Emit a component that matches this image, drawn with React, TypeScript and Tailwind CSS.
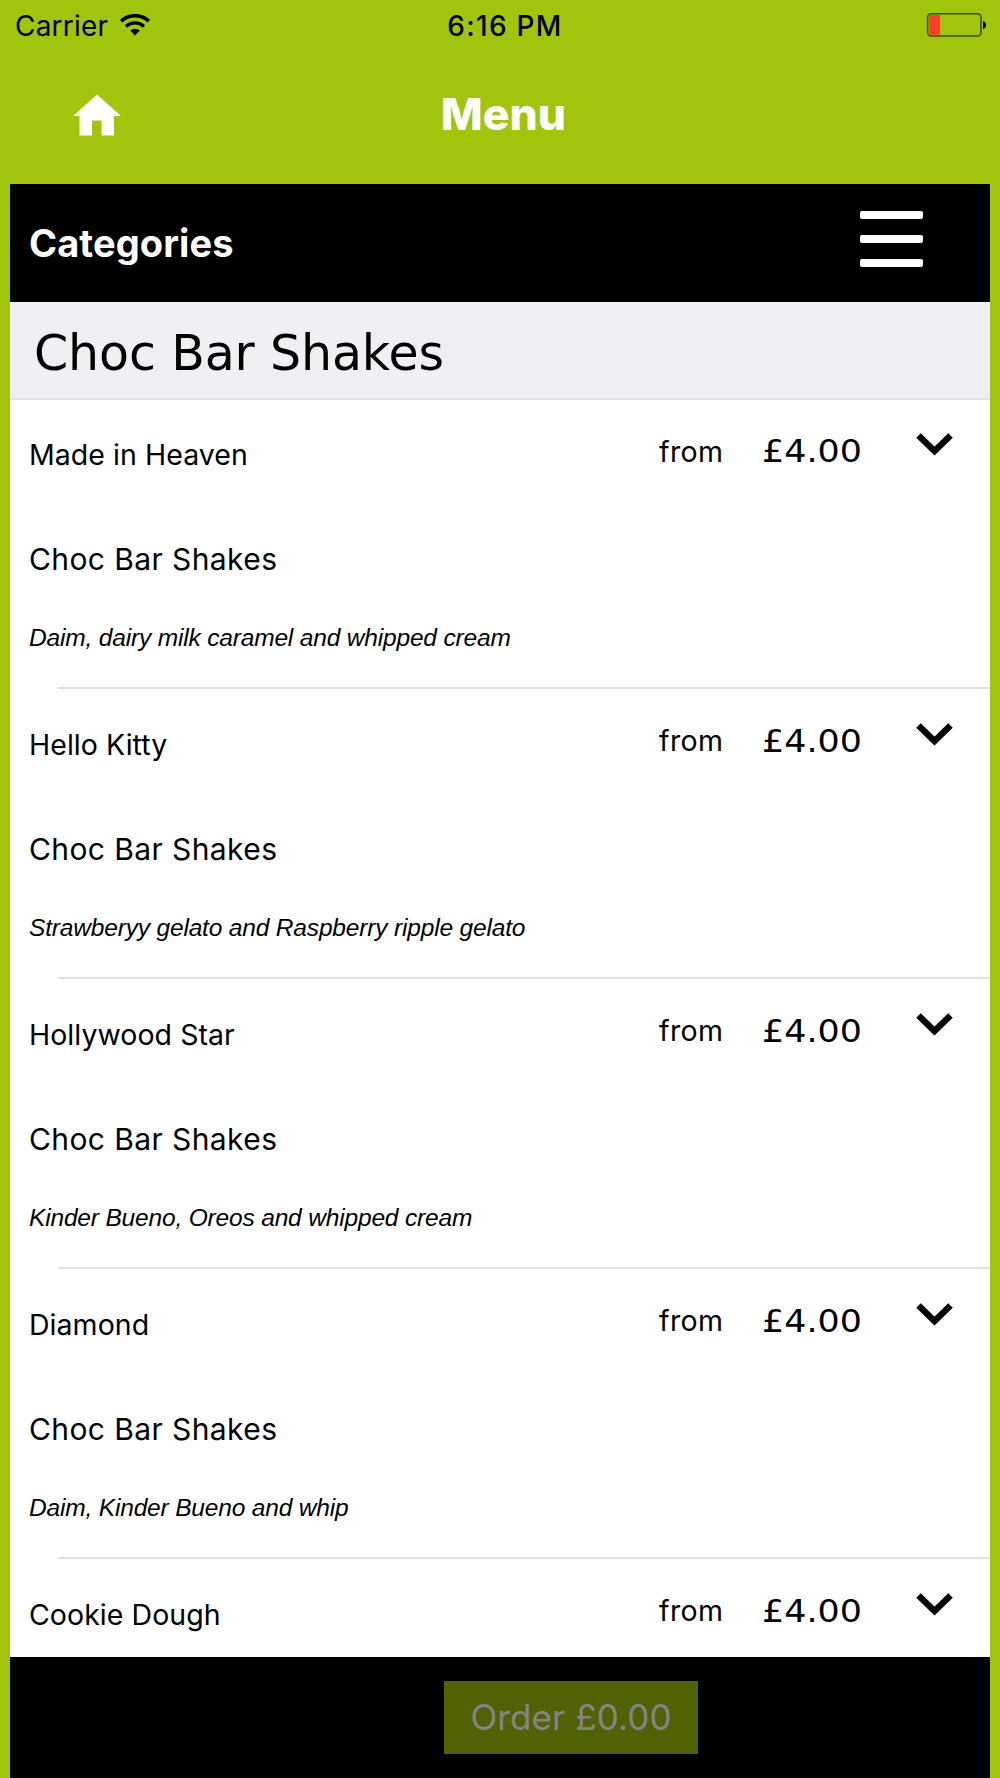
const menuItems = [
  {
    name: "Made in Heaven",
    category: "Choc Bar Shakes",
    description: "Daim, dairy milk caramel and whipped cream",
    price: "£4.00",
  },
  {
    name: "Hello Kitty",
    category: "Choc Bar Shakes",
    description: "Strawberyy gelato and Raspberry ripple gelato",
    price: "£4.00",
  },
  {
    name: "Hollywood Star",
    category: "Choc Bar Shakes",
    description: "Kinder Bueno, Oreos and whipped cream",
    price: "£4.00",
  },
  {
    name: "Diamond",
    category: "Choc Bar Shakes",
    description: "Daim, Kinder Bueno and whip",
    price: "£4.00",
  },
  {
    name: "Cookie Dough",
    price: "£4.00",
  },
];

type MenuItem = {
  name: string;
  price: string;
  category?: string;
  description?: string;
};

function StatusBar() {
  return (
    <div className="grid h-[51px] shrink-0 grid-cols-3 items-center pl-[15px] pr-[14px] text-[28px] leading-[51px]">
      <div className="flex items-center gap-[12px]">
        <span className="pt-px tracking-[0.2px]">Carrier</span>
        <svg className="mb-[3px] h-[22px] w-[30px]" viewBox="0 0 30 22" fill="none">
          <path d="M1.2 7.2a20 20 0 0 1 27.6 0" stroke="black" strokeWidth="3.6" />
          <path d="M6 12.4a13.2 13.2 0 0 1 18 0" stroke="black" strokeWidth="3.4" />
          <path d="M10.2 16.6a7.2 7.2 0 0 1 9.6 0L15 21.6z" fill="black" />
        </svg>
      </div>
      <span className="pt-px pl-[9px] text-center font-medium tracking-[1.3px]">6:16 PM</span>
      <svg className="mb-[2px] h-[24px] w-[60px] justify-self-end" viewBox="0 0 60 24" fill="none">
        <rect x="1.6" y="0.8" width="53.4" height="22.2" rx="3.5" stroke="#3f4e06" strokeWidth="1.6" />
        <rect x="3.2" y="2" width="10.8" height="19.8" rx="1" fill="#ff3b30" />
        <path d="M57 8c2 .6 3 2 3 4s-1 3.4-3 4z" fill="black" />
      </svg>
    </div>
  );
}

function Header() {
  return (
    <div className="grid h-[133px] shrink-0 grid-cols-3 items-center pb-[5px]">
      <svg className="ml-[73px] h-[42px] w-[48px]" viewBox="0 0 48 42">
        <path d="M24 0.5L48 22H41V41.5H28.5V26.5H19V41.5H6.5V22H0z" fill="white" />
      </svg>
      <h1 className="pb-[2px] pl-[7px] text-center text-[44.5px] font-extrabold text-white">Menu</h1>
    </div>
  );
}

function CategoriesBar() {
  return (
    <div className="flex h-[118px] shrink-0 items-center justify-between bg-black pl-[19px] pr-[67px]">
      <span className="text-[38px] font-bold tracking-[0.1px] text-white">Categories</span>
      <div className="mb-[8px] flex flex-col gap-[16px]">
        <div className="h-[8px] w-[63px] rounded-[2px] bg-white" />
        <div className="h-[8px] w-[63px] rounded-[2px] bg-white" />
        <div className="h-[8px] w-[63px] rounded-[2px] bg-white" />
      </div>
    </div>
  );
}

function MenuRow({ item }: { item: MenuItem }) {
  return (
    <div className="shrink-0">
      <div className="flex h-[111.7px] items-center pl-[19px] pr-[37px]">
        <span className="w-[630px] text-[28.5px] tracking-[0.05px]">{item.name}</span>
        <span className="mb-[7px] w-[103px] text-[28.5px] tracking-[0.4px]">from</span>
        <span className="mb-[8px] w-[154px] origin-left scale-x-[1.09] font-['DejaVu_Sans',sans-serif] text-[32px]">
          {item.price}
        </span>
        <svg className="mb-[21px] h-[23px] w-[37px]" viewBox="0 0 37 23" fill="none">
          <path d="M2.5 2.5L18.5 18L34.5 2.5" stroke="black" strokeWidth="6.5" />
        </svg>
      </div>
      {item.category && (
        <>
          <p className="pl-[19px] text-[30px] leading-[97px] tracking-[0.4px]">{item.category}</p>
          <p className="h-[79.2px] pl-[19px] font-['Liberation_Sans',Arial,sans-serif] text-[24.5px] leading-[59px] tracking-[-0.17px] italic">
            {item.description}
          </p>
          <div className="ml-[48px] h-[2px] bg-[#e1e0e4]" />
        </>
      )}
    </div>
  );
}

export default function App() {
  return (
    <div className="flex h-[1778px] w-[1000px] flex-col overflow-hidden bg-[#a2c40d] font-['Inter',sans-serif] text-black">
      <StatusBar />
      <Header />
      <div className="mx-[10px] flex min-h-0 flex-1 flex-col bg-white">
        <CategoriesBar />
        <h2 className="h-[97.6px] shrink-0 border-b-2 border-[#e1e0e4] bg-[#efeff4] pl-[24px] font-['DejaVu_Sans',Verdana,sans-serif] text-[49px] leading-[103px] tracking-[-0.12px]">
          Choc Bar Shakes
        </h2>
        <div className="flex min-h-0 flex-1 flex-col overflow-hidden">
          {menuItems.map((item) => (
            <MenuRow key={item.name} item={item} />
          ))}
        </div>
        <div className="flex h-[121px] shrink-0 justify-center bg-black pt-[24px] pl-[142px]">
          <button
            disabled
            className="h-[73px] w-[254px] bg-[#516205] text-[35px] tracking-[0.1px] text-[#858585]"
          >
            Order £0.00
          </button>
        </div>
      </div>
    </div>
  );
}
